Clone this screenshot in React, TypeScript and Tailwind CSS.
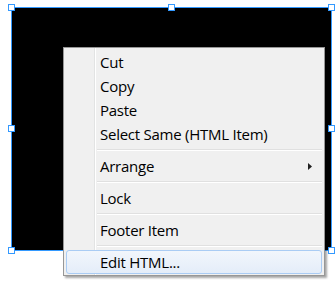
import React from "react";

function Handle({ className }: { className: string }) {
  return (
    <div
      className={`absolute w-[7px] h-[7px] bg-white border border-[#3399ff] ${className}`}
    />
  );
}

function Item({ label, arrow, active }: { label: string; arrow?: boolean; active?: boolean }) {
  return (
    <div
      className={`relative flex h-[24px] items-center rounded-[3px] border ${
        active
          ? "border-[#aaccf4] bg-[linear-gradient(#f2f6fc,#e4edf9)]"
          : "border-transparent"
      }`}
    >
      <span className="pl-[33px] text-[15px] leading-none tracking-[-0.25px] text-black">{label}</span>
      {arrow && (
        <svg className="absolute right-[9px] top-[8px]" width="4" height="7" viewBox="0 0 4 7">
          <path d="M0 0 L4 3.5 L0 7 Z" fill="#202020" />
        </svg>
      )}
    </div>
  );
}

function Sep() {
  return (
    <div className="flex h-[8px] flex-col justify-center pl-[31px]">
      <div className="h-px bg-[#e0e0e0]" />
      <div className="h-px bg-white" />
    </div>
  );
}

export default function App() {
  return (
    <div
      className="relative h-[290px] w-[335px] overflow-hidden bg-white"
      style={{ fontFamily: '"Open Sans", "Noto Sans", sans-serif' }}
    >
      <div className="relative ml-[11px] mt-[7px] h-[244px] w-[321px] border border-[#3399ff] bg-black">
        <Handle className="left-[-4px] top-[-4px]" />
        <Handle className="left-[156px] top-[-4px]" />
        <Handle className="right-[-4px] top-[-4px]" />
        <Handle className="left-[-4px] top-[117px]" />
        <Handle className="right-[-4px] top-[117px]" />
        <Handle className="left-[-4px] bottom-[-4px]" />
        <Handle className="left-[156px] bottom-[-4px]" />
        <Handle className="right-[-4px] bottom-[-4px]" />
      </div>

      <div className="absolute left-[63px] top-[47px] h-[229px] w-[262px] border border-[#979797] bg-[#f0f0f0] px-[2px] pt-[2px] shadow-[2px_2px_2px_rgba(0,0,0,0.35)]">
        <div className="absolute bottom-0 left-[30px] top-0 w-px bg-[#e2e3e3]" />
        <div className="absolute bottom-0 left-[31px] top-0 w-px bg-white" />
        <div className="relative flex flex-col">
          <Item label="Cut" />
          <Item label="Copy" />
          <Item label="Paste" />
          <Item label="Select Same (HTML Item)" />
          <Sep />
          <Item label="Arrange" arrow />
          <Sep />
          <Item label="Lock" />
          <Sep />
          <Item label="Footer Item" />
          <Sep />
          <Item label="Edit HTML..." active />
        </div>
      </div>
    </div>
  );
}
